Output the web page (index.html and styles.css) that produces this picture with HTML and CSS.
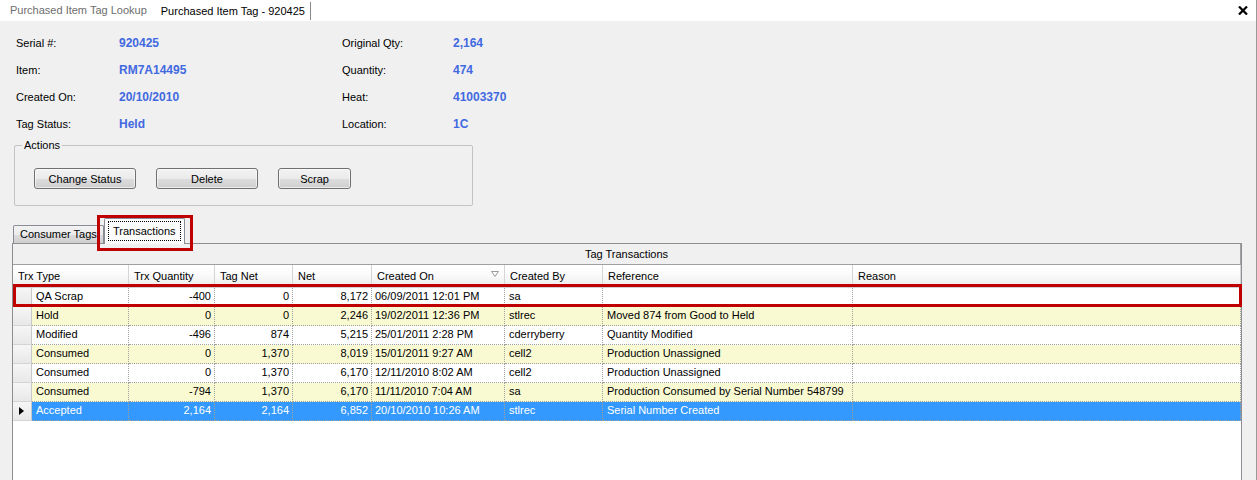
FILE: index.html
```html
<!DOCTYPE html>
<html>
<head>
<meta charset="utf-8">
<title>Purchased Item Tag - 920425</title>
<link rel="stylesheet" href="styles.css">
</head>
<body>
<div class="app">
  <div class="doc-tabs">
    <div class="doc-tab">Purchased Item Tag Lookup</div>
    <div class="doc-tab active">Purchased Item Tag - 920425</div>
    <svg class="close" width="10" height="9" viewBox="0 0 10 9"><path d="M1 0.5 L9 8.5 M9 0.5 L1 8.5" stroke="#000" stroke-width="2.2" fill="none"/></svg>
  </div>
  <div class="content">
    <div class="fields">
      <span class="lbl">Serial #:</span><span class="val">920425</span><span class="lbl">Original Qty:</span><span class="val">2,164</span>
      <span class="lbl">Item:</span><span class="val">RM7A14495</span><span class="lbl">Quantity:</span><span class="val">474</span>
      <span class="lbl">Created On:</span><span class="val">20/10/2010</span><span class="lbl">Heat:</span><span class="val">41003370</span>
      <span class="lbl">Tag Status:</span><span class="val">Held</span><span class="lbl">Location:</span><span class="val">1C</span>
    </div>
    <div class="group">
      <span class="legend">Actions</span>
      <div class="buttons">
        <button class="btn btn-wide">Change Status</button>
        <button class="btn btn-wide">Delete</button>
        <button class="btn btn-narrow">Scrap</button>
      </div>
    </div>
    <div class="tabs">
      <div class="tab">Consumer Tags</div>
      <div class="tab selected"><span class="focus">Transactions</span></div>
    </div>
    <div class="panel">
      <div class="caption">Tag Transactions</div>
      <div class="row header">
        <div class="hc span2">Trx Type</div>
        <div class="hc">Trx Quantity</div>
        <div class="hc">Tag Net</div>
        <div class="hc">Net</div>
        <div class="hc sorted"><span>Created On</span><svg width="8" height="6" viewBox="0 0 8 6"><path d="M0.5 0.5 H7.5 L4 5.5 Z" fill="none" stroke="#9a9a9a" stroke-width="1"/></svg></div>
        <div class="hc">Created By</div>
        <div class="hc">Reference</div>
        <div class="hc">Reason</div>
      </div>
      <div class="row">
        <div class="rh"></div><div class="c">QA Scrap</div><div class="c n">-400</div><div class="c n">0</div><div class="c n">8,172</div><div class="c d">06/09/2011 12:01 PM</div><div class="c">sa</div><div class="c"></div><div class="c"></div>
      </div>
      <div class="row alt">
        <div class="rh"></div><div class="c">Hold</div><div class="c n">0</div><div class="c n">0</div><div class="c n">2,246</div><div class="c d">19/02/2011 12:36 PM</div><div class="c">stlrec</div><div class="c">Moved 874 from Good to Held</div><div class="c"></div>
      </div>
      <div class="row">
        <div class="rh"></div><div class="c">Modified</div><div class="c n">-496</div><div class="c n">874</div><div class="c n">5,215</div><div class="c d">25/01/2011 2:28 PM</div><div class="c">cderryberry</div><div class="c">Quantity Modified</div><div class="c"></div>
      </div>
      <div class="row alt">
        <div class="rh"></div><div class="c">Consumed</div><div class="c n">0</div><div class="c n">1,370</div><div class="c n">8,019</div><div class="c d">15/01/2011 9:27 AM</div><div class="c">cell2</div><div class="c">Production Unassigned</div><div class="c"></div>
      </div>
      <div class="row">
        <div class="rh"></div><div class="c">Consumed</div><div class="c n">0</div><div class="c n">1,370</div><div class="c n">6,170</div><div class="c d">12/11/2010 8:02 AM</div><div class="c">cell2</div><div class="c">Production Unassigned</div><div class="c"></div>
      </div>
      <div class="row alt">
        <div class="rh"></div><div class="c">Consumed</div><div class="c n">-794</div><div class="c n">1,370</div><div class="c n">6,170</div><div class="c d">11/11/2010 7:04 AM</div><div class="c">sa</div><div class="c">Production Consumed by Serial Number 548799</div><div class="c"></div>
      </div>
      <div class="row sel">
        <div class="rh"><span class="arrow"></span></div><div class="c">Accepted</div><div class="c n">2,164</div><div class="c n">2,164</div><div class="c n">6,852</div><div class="c d">20/10/2010 10:26 AM</div><div class="c">stlrec</div><div class="c">Serial Number Created</div><div class="c"></div>
      </div>
    </div>
  </div>
</div>
<div class="mark mark-tab"></div>
<div class="mark mark-row"></div>
</body>
</html>
```
FILE: styles.css
```css
* { box-sizing: border-box; }
html, body { margin: 0; padding: 0; }
body {
  width: 1257px;
  height: 480px;
  overflow: hidden;
  position: relative;
  font-family: "Liberation Sans", Arial, sans-serif;
  font-size: 11px;
  color: #000;
  background: #f0f0f0;
}
.app {
  height: 480px;
  border-right: 1px solid #9a9a9a;
  display: flex;
  flex-direction: column;
}
.doc-tabs {
  flex: none;
  height: 21px;
  background: #fff;
  display: flex;
  align-items: flex-start;
}
.doc-tab {
  line-height: 21px;
  padding: 0 7px;
  color: #6d6d6d;
  white-space: nowrap;
}
.doc-tab:first-child { padding-left: 10px; }
.doc-tab.active {
  color: #000;
  padding-right: 5px;
  margin-top: 2px;
  line-height: 18px;
  border-right: 1px solid #8a8a8a;
}
.close {
  margin: 6px 8px 0 auto;
}
.content {
  flex: 1;
  display: flex;
  flex-direction: column;
  min-height: 0;
}
.fields {
  display: grid;
  grid-template-columns: 103px 223px 111px auto;
  grid-auto-rows: 27px;
  align-items: center;
  padding: 8px 0 0 16px;
}
.val {
  font-weight: bold;
  font-size: 12px;
  color: #4169e1;
}
.group {
  margin: 8px 0 0 14px;
  width: 459px;
  height: 61px;
  border: 1px solid #c3c3c3;
  border-radius: 2px;
}
.legend {
  display: block;
  width: max-content;
  margin: -7px 0 0 7px;
  padding: 0 2px;
  line-height: 13px;
  background: #f0f0f0;
}
.buttons {
  display: flex;
  gap: 20px;
  margin: 16px 0 0 19px;
}
.btn {
  height: 21px;
  padding: 0;
  font-family: "Liberation Sans", Arial, sans-serif;
  font-size: 11px;
  color: #000;
  border: 1px solid #707070;
  border-radius: 3px;
  background: linear-gradient(#f2f2f2 0%, #ebebeb 50%, #dddddd 50%, #cfcfcf 100%);
  box-shadow: inset 0 0 0 1px rgba(255,255,255,0.6);
}
.btn-wide { width: 102px; }
.btn-narrow { width: 73px; }
.tabs {
  flex: none;
  display: flex;
  align-items: flex-end;
  height: 25px;
  margin: 12px 0 0 13px;
}
.tab {
  width: 91px;
  height: 18px;
  padding-left: 6px;
  line-height: 17px;
  white-space: nowrap;
  overflow: hidden;
  border: 1px solid #898c95;
  border-bottom: none;
  border-radius: 2px 2px 0 0;
  background: linear-gradient(#f2f2f2 0%, #ebebeb 50%, #dddddd 50%, #cfcfcf 100%);
}
.tab.selected {
  position: relative;
  z-index: 1;
  width: 81px;
  height: 26px;
  margin-bottom: -1px;
  padding: 2px 0 0 3px;
  background: #fcfcfc;
  overflow: visible;
}
.focus {
  display: block;
  width: 73px;
  height: 20px;
  padding-left: 4px;
  line-height: 19px;
  border: 1px dotted #000;
}
.panel {
  flex: 1;
  margin-left: 12px;
  width: 1230px;
  border: 1px solid #8c8e94;
  border-bottom: none;
  background: #fff;
}
.caption {
  height: 21px;
  line-height: 20px;
  text-align: center;
  background: #f0f0f0;
  border-bottom: 1px solid #a0a0a0;
  border-right: 1px solid #a0a0a0;
}
.row {
  display: grid;
  grid-template-columns: 19px 97px 86px 78px 79px 133px 98px 250px 1fr;
  height: 19px;
}
.row.header {
  height: 23px;
  background: linear-gradient(#ffffff 0%, #fbfbfb 45%, #ebebeb 100%);
  border-bottom: 1px solid #d0d0d0;
}
.hc {
  padding-left: 5px;
  line-height: 23px;
  border-right: 1px solid #d5d5d5;
  white-space: nowrap;
}
.hc.span2 { grid-column: span 2; }
.hc.sorted {
  display: flex;
  justify-content: space-between;
  align-items: center;
  padding-right: 5px;
}
.hc.sorted svg { margin-top: -6px; }
.rh {
  display: flex;
  align-items: center;
  padding-left: 6px;
  background: linear-gradient(#f6f6f6, #e8e8e8);
  border-right: 1px solid #c8c8c8;
  border-bottom: 1px solid #d4d4d4;
}
.c {
  line-height: 17px;
  padding: 0 3px 0 4px;
  white-space: nowrap;
  overflow: hidden;
  border-right: 1px dotted #a0a0a0;
  border-bottom: 1px dotted #a0a0a0;
  background: #fff;
}
.c.n { text-align: right; }
.c.d { padding-left: 3px; }
.row.alt .c { background: #fafad2; }
.row.sel .c { background: #3399ff; color: #fff; }
.arrow {
  width: 0;
  height: 0;
  border-left: 5px solid #000;
  border-top: 4.5px solid transparent;
  border-bottom: 4.5px solid transparent;
}
.mark {
  position: absolute;
  border: 3px solid #c00000;
  pointer-events: none;
}
.mark-tab { left: 97px; top: 215px; width: 96px; height: 36px; }
.mark-row { left: 13px; top: 284px; width: 1229px; height: 23px; }
```
